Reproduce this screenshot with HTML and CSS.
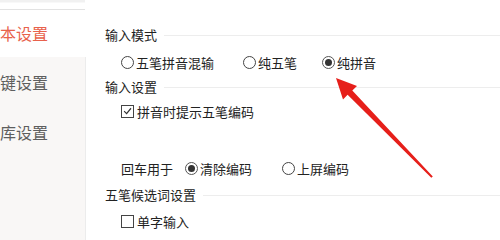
FILE: index.html
```html
<!DOCTYPE html>
<html lang="zh-CN">
<head>
<meta charset="utf-8">
<link rel="stylesheet" href="styles.css">
</head>
<body>
<div class="page">
  <aside class="sidebar">
    <div class="top-strip"></div>
    <div class="nav-item active">本设置</div>
    <div class="nav-list">
      <div class="nav-item">键设置</div>
      <div class="nav-item">库设置</div>
    </div>
  </aside>
  <main class="content">
    <div class="group-title">输入模式</div>
    <div class="row r-mode">
      <label class="opt"><span class="radio"></span>五笔拼音混输</label>
      <label class="opt o-wubi"><span class="radio"></span>纯五笔</label>
      <label class="opt o-pinyin"><span class="radio on"></span>纯拼音</label>
    </div>
    <div class="group-title g2">输入设置</div>
    <div class="row r-cb">
      <label class="opt"><span class="check on"><svg viewBox="0 0 12 12" width="12" height="12"><path d="M2.3 6.2 L5 8.8 L9.8 3" fill="none" stroke="#333" stroke-width="1.3"/></svg></span>拼音时提示五笔编码</label>
    </div>
    <div class="row r-enter">
      <span class="lbl">回车用于</span>
      <label class="opt o-clear"><span class="radio on"></span>清除编码</label>
      <label class="opt o-commit"><span class="radio"></span>上屏编码</label>
    </div>
    <div class="group-title g3">五笔候选词设置</div>
    <div class="row r-single">
      <label class="opt"><span class="check"></span>单字输入</label>
    </div>
  </main>
  <svg class="arrow" width="500" height="240" viewBox="0 0 500 240">
    <polygon fill="#e61f1a" points="336,78 357,86 352.3,90.4 432.8,176.4 431.3,177.7 347.6,94.7 343,99.5"/>
  </svg>
</div>
</body>
</html>
```

FILE: styles.css
```css
* { box-sizing: border-box; }
html, body {
  margin: 0;
  padding: 0;
  background: #ffffff;
}
body {
  width: 500px;
  height: 240px;
  overflow: hidden;
  font-family: "Noto Sans CJK SC", "Noto Sans", sans-serif;
}
.page {
  position: relative;
  display: flex;
  width: 500px;
  height: 240px;
  overflow: hidden;
}
.sidebar {
  width: 86px;
  flex: none;
  display: flex;
  flex-direction: column;
}
.top-strip {
  height: 10px;
  border-bottom: 1px solid #e2e2e2;
  margin-right: 1px;
  background: linear-gradient(#f1f1f1 0, #f1f1f1 2px, #ffffff 3px);
}
.nav-item {
  height: 50px;
  line-height: 50px;
  font-size: 16px;
  color: #5e5e5e;
  white-space: nowrap;
}
.nav-item.active {
  height: 47px;
  line-height: 46px;
  color: #e8624c;
}
.nav-list {
  flex: 1;
  background: #f9f7f6;
  border-right: 1px solid #ececec;
}
.content {
  flex: 1;
  padding: 25px 0 0 19px;
  font-size: 13px;
  color: #222;
}
.group-title {
  display: flex;
  align-items: center;
  height: 20px;
  line-height: 20px;
  white-space: nowrap;
}
.group-title::after {
  content: "";
  flex: 1;
  height: 1px;
  background: #ededed;
  margin-left: 7px;
}
.g2 { margin-top: 5px; }
.g3 { margin-top: 7px; }
.row {
  display: flex;
  align-items: center;
  height: 20px;
  padding-left: 16px;
  white-space: nowrap;
}
.r-mode { margin-top: 7px; }
.r-cb { margin-top: 4px; }
.r-enter { margin-top: 37px; }
.r-single { margin-top: 6px; }
.opt {
  display: flex;
  align-items: center;
}
.o-wubi { margin-left: 29px; }
.o-pinyin { margin-left: 25px; }
.lbl { margin-right: 12px; }
.o-commit { margin-left: 30px; }
.radio {
  width: 13px;
  height: 13px;
  border: 1px solid #444;
  border-radius: 50%;
  margin-right: 2px;
  display: flex;
  align-items: center;
  justify-content: center;
  flex: none;
}
.radio.on {
  border-color: #555;
}
.radio.on::after {
  content: "";
  width: 7px;
  height: 7px;
  border-radius: 50%;
  background: #333;
}
.check {
  width: 13px;
  height: 13px;
  border: 1px solid #444;
  margin-right: 3px;
  display: flex;
  align-items: center;
  justify-content: center;
  flex: none;
}
.check svg { display: block; }
.arrow {
  position: absolute;
  left: 0;
  top: 0;
  pointer-events: none;
}
```
